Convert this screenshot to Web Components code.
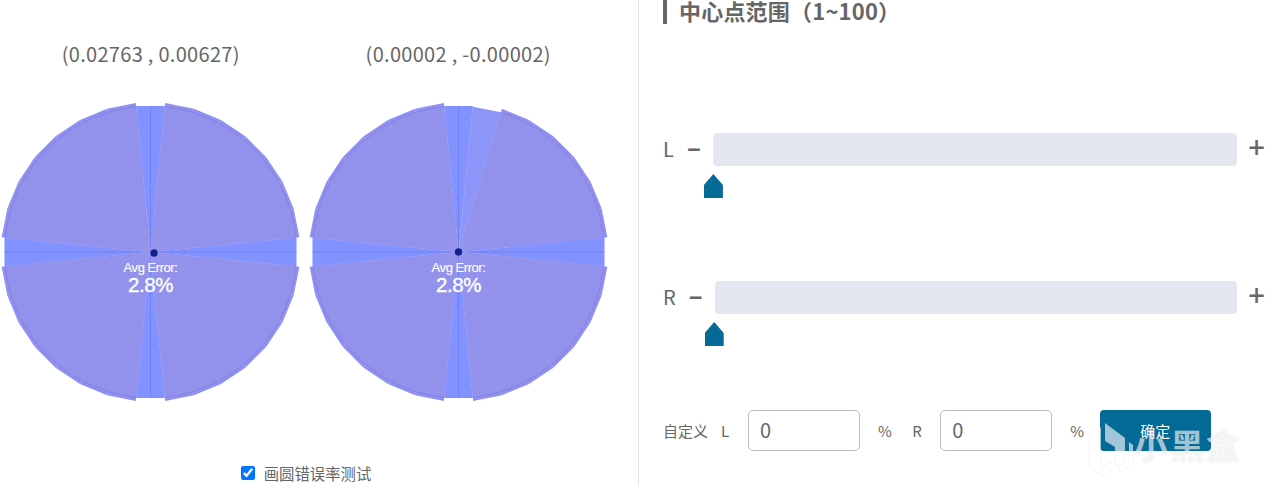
<!DOCTYPE html>
<html lang="zh"><head><meta charset="utf-8"><title>Calibration</title>
<style>html,body{margin:0;padding:0;background:#fff;overflow:hidden}</style></head>
<body><x-app></x-app>
<script>
const FONT='"Noto Sans CJK SC","Noto Sans",sans-serif';
class XChart extends HTMLElement{
  connectedCallback(){
    const s=this.attachShadow({mode:'open'});
    const cx=153.5,cy=155,R=146;
    const dx=+this.getAttribute('dot-x')||0,dy=+this.getAttribute('dot-y')||0;
    const radii=JSON.parse(this.getAttribute('radii')||'{}');
    const xy=(r,a)=>{const t=a*Math.PI/180;return [(cx+r*Math.sin(t)).toFixed(2),(cy-r*Math.cos(t)).toFixed(2)]};
    const pt=(r,a)=>xy(r,a).join(',');
    const arc=(r,a,b)=>{const p=xy(r,a),q=xy(r,b);return `M${cx} ${cy}L${p[0]} ${p[1]}A${r} ${r} 0 0 1 ${q[0]} ${q[1]}Z`};
    const st=11.25;let axis='',fills='',lines='',rim='';
    for(let i=0;i<32;i++){
      const a0=-5.625+i*st,a1=a0+st,c=R/Math.cos(st/2*Math.PI/180);
      if(i%8===0){
        const e=xy(R,a0+st/2);
        axis+=`<polygon points="${cx},${cy} ${pt(c,a0)} ${pt(c,a1)}" fill="#8292ff"/><line x1="${cx}" y1="${cy}" x2="${e[0]}" y2="${e[1]}" stroke="#7082f0"/>`;
      }else{
        const r=radii[i]||149.6;
        const light=r<147;
        fills+=`<polygon points="${cx},${cy} ${pt(r,a0)} ${pt(r,a1)}" fill="${light?'#8c96f8':'#9090f4'}"/>`;
        if(!light){
          fills+=`<path d="${arc(R,a0,a1)}" fill="#9292ec"/>`;
          const p=xy(R,a0),q=xy(R,a1);
          rim+=`<path d="M${p[0]} ${p[1]}A${R} ${R} 0 0 1 ${q[0]} ${q[1]}" fill="none" stroke="#8383dd" stroke-width="1"/>`;
        }
        const p=xy(R,a0);
        lines+=`<line x1="${cx}" y1="${cy}" x2="${p[0]}" y2="${p[1]}" stroke="#9898ee" stroke-width=".6"/>`;
      }
    }
    s.innerHTML=`<style>
      :host{display:block;width:307.5px;color:#666;font-family:${FONT}}
      .t{font-size:20px;line-height:28px;letter-spacing:.3px;text-align:center;height:28px;margin-bottom:28px;color:#666;margin-top:-1px;padding-bottom:1px}
      svg{display:block;width:307.5px;height:310px;overflow:visible}
      text{font-family:"Liberation Sans",Arial,sans-serif;fill:#fff;text-anchor:middle}
      </style>
      <div class="t"><slot></slot></div>
      <svg viewBox="0 0 307.5 310">
        ${axis}${fills}${lines}${rim}
        <circle cx="${cx+dx}" cy="${cy+dy}" r="3.7" fill="#10238f"/>
        <text x="${cx}" y="175" font-size="13" letter-spacing="-.45" stroke="#fff" stroke-width=".12">Avg Error:</text>
        <text x="${cx}" y="195" font-size="20.5" letter-spacing="-.4" stroke="#fff" stroke-width=".35">2.8%</text>
      </svg>`;
  }
}
customElements.define('x-chart',XChart);

class XCheck extends HTMLElement{
  constructor(){super();this.attachShadow({mode:'open'}).innerHTML=`<style>
    :host{display:flex;justify-content:center;align-items:center;height:20px;font:15.4px/20px ${FONT};color:#666}
    input{width:14px;height:14px;margin:0 9px 0 0;accent-color:#0075ff;flex:none}
    </style><input type="checkbox" checked><span><slot></slot></span>`}
}
customElements.define('x-check',XCheck);

class XSlider extends HTMLElement{
  constructor(){super();this.attachShadow({mode:'open'}).innerHTML=`<style>
    :host{display:block;font-family:${FONT};color:#666}
    .row{display:flex;align-items:center;height:33px}
    .l{font-size:20px;line-height:31px;height:33px;margin-right:13px}
    .b{color:#666;line-height:33px;text-align:center;flex:none}
    .m{font-size:24px;width:13px;margin-right:13px;font-family:"Noto Sans",sans-serif;font-weight:700;margin-top:-3px}
    .p{font-size:30px;width:15px;margin-left:11px;font-family:"Noto Sans",sans-serif;font-weight:500;margin-top:-6px;margin-right:2px}
    .w{flex:1;position:relative;height:33px}
    .track{height:33px;background:#e4e7ef;border-radius:4px}
    .thumb{position:absolute;left:var(--thumb-left,-9px);top:41px;width:19px;height:24px;background:#066a96;clip-path:polygon(50% 0,100% 46%,100% 100%,0 100%,0 46%)}
    .sp{height:32px}
    </style><div class="row"><span class="l"><slot></slot></span><span class="b m">−</span><div class="w"><div class="track"></div><div class="thumb"></div></div><span class="b p">+</span></div><div class="sp"></div>`}
}
customElements.define('x-slider',XSlider);

class XCustom extends HTMLElement{
  constructor(){super();this.attachShadow({mode:'open'}).innerHTML=`<style>
    :host{display:flex;align-items:center;height:41px;font:15px/41px ${FONT};color:#666}
    input{box-sizing:border-box;width:112px;height:41px;border:1px solid #bdbdbd;border-radius:5px;padding:0 0 2px 11px;margin:0;font:20px "Noto Sans CJK SC",sans-serif;color:#666;background:#fff;outline:0}
    .lab{width:27px;flex:none}.lab.r{width:28px}
    .zh{margin-right:13px}
    .pc{margin-left:18px;margin-right:15.5px}.pc.a{margin-right:20.5px}
    button{box-sizing:border-box;width:111px;height:41px;border:0;border-radius:4px;background:#066a96;color:#fff;font:15px ${FONT};padding:0;margin:0}
    </style><span class="zh">自定义</span><span class="lab">L</span><input value="0"><span class="pc a">%</span><span class="lab r">R</span><input value="0"><span class="pc">%</span><button>确定</button>`}
}
customElements.define('x-custom',XCustom);

class XApp extends HTMLElement{
  constructor(){super();this.attachShadow({mode:'open'}).innerHTML=`<style>
    :host{display:flex;width:1280px;height:486px;overflow:hidden;position:relative;background:#fff;font-family:${FONT};color:#666}
    .left{width:639px;box-sizing:border-box;border-right:1px solid #e6e6e6;padding-top:41px;flex:none}
    .charts{display:flex;margin-left:-3px}
    x-check{margin-top:56px;width:612px}
    .right{flex:1;padding:0 15px 0 24px;box-sizing:border-box;width:641px}
    h2{margin:0;height:24px;border-left:4px solid #666;padding-left:12px;font:700 22px/20px ${FONT};letter-spacing:.2px;color:#666;white-space:nowrap}
    .s1{margin-top:109px}.s2{margin-top:83px;--thumb-left:-10px}.c{margin-top:64px}
    .wm{position:absolute;left:1088px;top:410px;display:flex;pointer-events:none;align-items:flex-start;height:70px}
    .wm svg{display:block;width:46px;height:62px;margin-top:12px}
    .wm span{font:700 34px/70px ${FONT};letter-spacing:2px;color:rgba(255,255,255,.62);text-shadow:0 0 1.5px rgba(120,120,120,.2)}
    </style>
    <div class="left"><div class="charts">
      <x-chart dot-x="3.5" dot-y="1">(0.02763 , 0.00627)</x-chart>
      <x-chart radii='{"1":146}'>(0.00002 , -0.00002)</x-chart>
    </div><x-check>画圆错误率测试</x-check></div>
    <div class="right"><h2>中心点范围（1~100）</h2>
      <x-slider class="s1">L</x-slider><x-slider class="s2">R</x-slider><x-custom class="c"></x-custom></div>
    <div class="wm"><svg viewBox="0 0 46 62"><g fill="rgba(255,255,255,.62)" stroke="rgba(120,120,120,.12)" stroke-width=".6"><path d="M17 1 37 16V38L27 44V25L17 19Z"/><path d="M1 12 13 5V46L24 40V48L14 54 1 46Z"/><path d="M31 44 41 38V20L45 23V41L31 50Z"/></g></svg><span>小黑盒</span></div>`}
}
customElements.define('x-app',XApp);
</script></body></html>
